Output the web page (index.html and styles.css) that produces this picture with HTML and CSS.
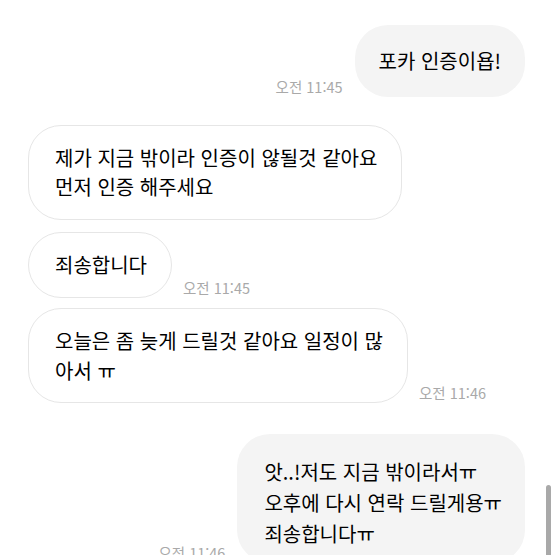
FILE: index.html
```html
<!DOCTYPE html>
<html lang="ko">
<head>
<meta charset="utf-8">
<link rel="stylesheet" href="styles.css">
</head>
<body>
<div class="chat">
  <div class="row out first">
    <span class="time">오전 11:45</span>
    <div class="bubble out-b b1">포카 인증이욥!</div>
  </div>
  <div class="row in gap-l">
    <div class="bubble in-b">제가 지금 밖이라 인증이 않될것 같아요<br>먼저 인증 해주세요</div>
  </div>
  <div class="row in gap-s">
    <div class="bubble in-b">죄송합니다</div>
    <span class="time">오전 11:45</span>
  </div>
  <div class="row in gap-xs">
    <div class="bubble in-b b4">오늘은 좀 늦게 드릴것 같아요 일정이 많<br>아서 ㅠ</div>
    <span class="time">오전 11:46</span>
  </div>
  <div class="row out gap-l2">
    <span class="time">오전 11:46</span>
    <div class="bubble out-b b5">앗..!저도 지금 밖이라서ㅠ<br>오후에 다시 연락 드릴게용ㅠ<br>죄송합니다ㅠ</div>
  </div>
</div>
<div class="scrollbar"></div>
</body>
</html>
```
FILE: styles.css
```css
html, body {
  margin: 0;
  padding: 0;
  background: #ffffff;
}
body {
  width: 555px;
  height: 555px;
  overflow: hidden;
  position: relative;
  font-family: "Noto Sans CJK KR", "Noto Sans", sans-serif;
  color: #000000;
}
.chat {
  display: flex;
  flex-direction: column;
  padding: 25px 30px 0 28px;
}
.row {
  display: flex;
  align-items: flex-end;
}
.row.out {
  justify-content: flex-end;
  gap: 12px;
}
.row.in {
  justify-content: flex-start;
  gap: 11px;
}
.gap-l { margin-top: 28px; }
.gap-s { margin-top: 12px; }
.gap-xs { margin-top: 10px; }
.gap-l2 { margin-top: 31px; }
.bubble {
  font-size: 20px;
  font-weight: 400;
  line-height: 29px;
  white-space: nowrap;
  border-radius: 33px;
  padding: 17px 24px 18px 26px;
}
.in-b {
  background: #ffffff;
  border: 1px solid #e6e6e6;
}
.b4 {
  line-height: 30px;
  padding-bottom: 16px;
}
.out-b {
  background: #f4f4f4;
  padding: 21px 24px 22px 24px;
}
.b5 {
  line-height: 31px;
  padding: 22px 23px 14px 27px;
}
.time {
  font-size: 14.5px;
  line-height: 16px;
  color: #a9a9a9;
  margin-bottom: 2px;
  white-space: nowrap;
}
.scrollbar {
  position: absolute;
  left: 546px;
  top: 485px;
  width: 5px;
  height: 80px;
  border-radius: 3px;
  background: #a9a9a9;
}
```
